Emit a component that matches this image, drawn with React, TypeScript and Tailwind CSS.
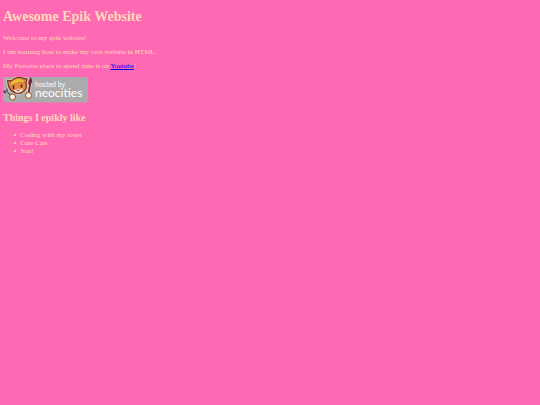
const likes = ['Coding with my sister', 'Cute Cats', 'You!']

function NeocitiesBadge() {
  return (
    <svg
      viewBox="0 0 85 26"
      className="block w-[85px] h-[26px]"
      role="img"
      aria-label="Hosted by Neocities"
    >
      <rect x="0" y="0" width="85" height="25.5" rx="3" fill="#ababab" />
      {/* fork */}
      <path d="M8 19L4 14.500M1.500 15.500l3-3M1 13v2.500l2 1M4 11.500v3" stroke="#dcdcdc" strokeWidth="2.600" fill="none" />
      <path d="M8 19L4 14.500M1.500 15.500l3-3M1 13v2.500l2 1M4 11.500v3" stroke="#5a5460" strokeWidth="1.500" fill="none" />
      {/* brush */}
      <path d="M25.500 17l2-14" stroke="#e6d8d6" strokeWidth="3.500" strokeLinecap="round" />
      <path d="M25.500 17l1.600-10" stroke="#6a2f2a" strokeWidth="1.800" />
      <path d="M25.600 8c-.6-3 .3-6 2.400-8 1.600 3 1.200 6-.4 8z" fill="#7c2033" />
      {/* cat */}
      <path
        d="M5.500 9L4.500 3.500 8.500 4c3-3.500 8-4.500 12-2.500l3.500.5-1 4.500c1 4.500-1 8.500-5 9.500-5 1.200-10.500-1-12.500-7z"
        fill="#e88b3e"
        stroke="#e8d6cc"
        strokeWidth="2.600"
      />
      <path
        d="M5.500 9L4.500 3.500 8.500 4c3-3.500 8-4.500 12-2.500l3.500.5-1 4.500c1 4.500-1 8.500-5 9.500-5 1.200-10.500-1-12.500-7z"
        fill="#e88b3e"
        stroke="#743a2a"
        strokeWidth="1.300"
      />
      <path d="M7 7.500c1-5 9-8 14-4.500l1 3C17 4.500 12 6 8 9z" fill="#f3b93a" stroke="#a4662c" strokeWidth="0.600" />
      <path d="M11 13.500c1.500-1 2.500-.5 4-2 1.500 1 3 0 4.500.5 0 2-1.500 3.500-4 3.700-2.300.2-4-.9-4.500-2.200z" fill="#f9dfcf" />
      <path d="M10.500 8.500v3.500M18.500 7.500v3" stroke="#3d1f1e" strokeWidth="1.600" />
      <path d="M13.500 13q2 1.500 3.500-.5" stroke="#7a3a34" strokeWidth="1" fill="none" />
      {/* paws */}
      <circle cx="9.500" cy="20" r="3" fill="#fff0dc" stroke="#8d5028" strokeWidth="1" />
      <circle cx="25.500" cy="18.500" r="3" fill="#fff0dc" stroke="#8d5028" strokeWidth="1" />
      <text x="32" y="10" fontSize="7" fill="#fff" className="font-['Lato',sans-serif]">
        hosted by
      </text>
      <text x="32" y="20" fontSize="12" fill="#fff" className="font-['Lato',sans-serif]">
        neocities
      </text>
    </svg>
  )
}

export default function App() {
  return (
    <div className="min-h-screen bg-[#ff69b4] px-[3px] py-[9px] font-['Liberation_Serif',serif] text-[7px] leading-2 text-[#ffdab9]">
      <h1 className="text-[14px] leading-4 font-bold">Awesome Epik Website</h1>
      <div className="mt-[9px] mb-[7px] flex flex-col gap-[6px]">
        <p>Welcome to my epik website!</p>
        <p>I am learning how to make my own website in HTML.</p>
        <p>
          My Favorite place to spend time is on{' '}
          <a href="#youtube" className="text-[#0000ee] underline">
            Youtube
          </a>
          !
        </p>
      </div>
      <NeocitiesBadge />
      <h2 className="mt-[9px] text-[10px] leading-3 font-bold">Things I epikly like</h2>
      <ul className="mt-[7px] pl-[11px]">
        {likes.map((like) => (
          <li
            key={like}
            className="flex items-center gap-1 before:size-[2px] before:rounded-full before:bg-[#ffdab9] before:content-['']"
          >
            {like}
          </li>
        ))}
      </ul>
    </div>
  )
}
